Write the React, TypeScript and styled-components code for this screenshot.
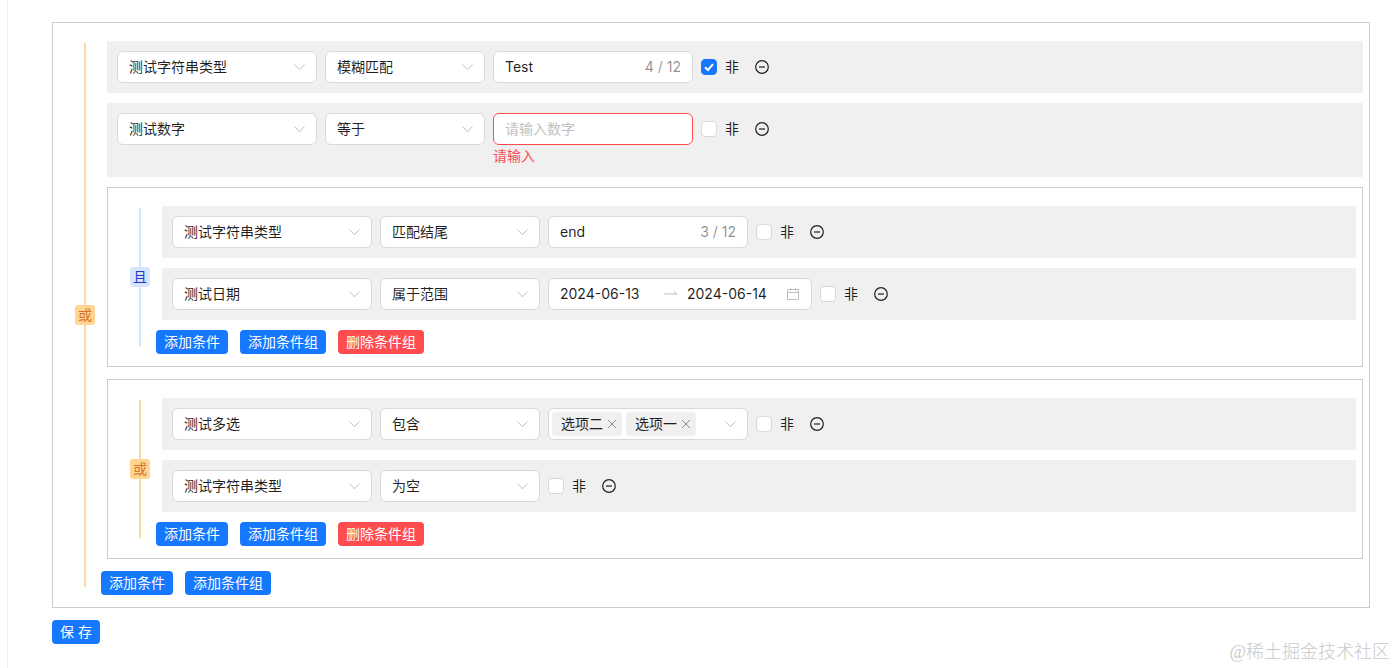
import { ReactNode } from "react"
import styled, { createGlobalStyle } from "styled-components"

const GlobalStyle = createGlobalStyle`
  html, body {
    margin: 0;
    background: #fff;
  }
  body {
    font-family: Inter, "Noto Sans CJK SC", sans-serif;
    font-size: 14px;
    line-height: 22px;
    color: rgba(0, 0, 0, 0.88);
  }
`

const Page = styled.div`
  box-sizing: border-box;
  height: 668px;
  margin-left: 7px;
  padding: 22px 26px 0 44px;
  border-left: 1px solid #f0f0f0;
  overflow: hidden;
  position: relative;
`

const Box = styled.div`
  display: flex;
  gap: 12px;
  padding: 18px 6px 12px 22px;
  margin-bottom: 2px;
  border: 1px solid #ccc;
`

const Rail = styled.div<{ $line: string }>`
  flex: none;
  width: 20px;
  margin: 2px 0 8px;
  display: flex;
  align-items: center;
  justify-content: center;
  background: linear-gradient(${(p) => p.$line}, ${(p) => p.$line}) center / 2px 100% no-repeat;
`

const Badge = styled.span<{ $bg: string; $fg: string }>`
  width: 20px;
  height: 20px;
  display: flex;
  align-items: center;
  justify-content: center;
  border-radius: 3px;
  background: ${(p) => p.$bg};
  color: ${(p) => p.$fg};
`

const Content = styled.div`
  flex: 1;
  min-width: 0;
  display: flex;
  flex-direction: column;
  gap: 10px;
`

const Row = styled.div`
  display: flex;
  align-items: flex-start;
  gap: 8px;
  padding: 10px;
  background: #f0f0f0;
`

const Actions = styled.div`
  display: flex;
  gap: 12px;
  margin-left: -6px;
`

const Button = styled.button<{ $danger?: boolean }>`
  height: 24px;
  padding: 0 8px;
  border: 0;
  border-radius: 4px;
  background: ${(p) => (p.$danger ? "#ff4d4f" : "#1677ff")};
  color: #fff;
  font: inherit;
  line-height: 24px;
`

const SaveBar = styled.div`
  display: flex;
  margin-top: 12px;
`

const Control = styled.div<{ $w: number; $error?: boolean }>`
  box-sizing: border-box;
  width: ${(p) => p.$w}px;
  height: 32px;
  padding: 0 11px;
  display: flex;
  align-items: center;
  justify-content: space-between;
  background: #fff;
  border: 1px solid ${(p) => (p.$error ? "#ff4d4f" : "#d9d9d9")};
  border-radius: 6px;
`

const MultiControl = styled(Control)`
  padding: 0 11px 0 3px;
`

const Placeholder = styled.span`
  color: #bfbfbf;
`

const Counter = styled.span`
  color: rgba(0, 0, 0, 0.45);
`

const FieldColumn = styled.div`
  display: flex;
  flex-direction: column;
`

const ErrorText = styled.div`
  color: #ff4d4f;
`

const DateValue = styled.span`
  flex: none;
  width: 96px;
`

const RangeArrow = styled.svg`
  flex: none;
  margin: 0 9px 0 8px;
`

const Calendar = styled.svg`
  flex: none;
  margin-left: 3px;
`

const RangeBody = styled.div`
  display: flex;
  align-items: center;
`

const Tags = styled.div`
  display: flex;
  gap: 4px;
`

const Tag = styled.span`
  height: 24px;
  padding: 0 5px 0 9px;
  display: flex;
  align-items: center;
  gap: 4px;
  border-radius: 4px;
  background: #f0f0f0;
`

const NotLabel = styled.label`
  height: 32px;
  display: flex;
  align-items: center;
  gap: 8px;
  padding-right: 8px;
`

const Check = styled.span<{ $on?: boolean }>`
  box-sizing: border-box;
  width: 16px;
  height: 16px;
  display: flex;
  align-items: center;
  justify-content: center;
  border-radius: 4px;
  background: ${(p) => (p.$on ? "#1677ff" : "#fff")};
  border: 1px solid ${(p) => (p.$on ? "#1677ff" : "#d9d9d9")};
`

const RemoveButton = styled.span`
  height: 32px;
  display: flex;
  align-items: center;
`

const Watermark = styled.div`
  position: absolute;
  right: 6px;
  bottom: 3px;
  font-family: "Liberation Serif", "Noto Sans CJK SC", serif;
  font-size: 18px;
  font-weight: 300;
  line-height: 26px;
  color: #c9c9c9;
`

const Chevron = () => (
  <svg width="12" height="12" viewBox="0 0 12 12" fill="none" stroke="#bfbfbf" strokeWidth="1">
    <path d="M1.5 3.5 6.5 8.8 11.5 3.5" />
  </svg>
)

const Cross = () => (
  <svg width="10" height="10" viewBox="0 0 10 10" fill="none" stroke="#8c8c8c" strokeWidth="1">
    <path d="M1 1 9 9M9 1 1 9" />
  </svg>
)

const MinusCircle = () => (
  <svg width="14" height="14" viewBox="0 0 14 14" fill="none" stroke="#1f1f1f" strokeWidth="1.2">
    <circle cx="7" cy="7" r="6.3" />
    <path d="M4 7h6" />
  </svg>
)

const CheckMark = () => (
  <svg width="12" height="12" viewBox="0 0 12 12" fill="none" stroke="#fff" strokeWidth="2">
    <path d="M2 6.2 5 9 10 3.2" />
  </svg>
)

function Select({ value, width }: { value: string; width: number }) {
  return (
    <Control $w={width}>
      <span>{value}</span>
      <Chevron />
    </Control>
  )
}

function TextValue({ value, count }: { value: string; count: string }) {
  return (
    <Control $w={200}>
      <span>{value}</span>
      <Counter>{count}</Counter>
    </Control>
  )
}

function DateRange() {
  return (
    <Control $w={264}>
      <RangeBody>
        <DateValue>2024-06-13</DateValue>
        <RangeArrow width="14" height="10" viewBox="0 0 14 10" fill="none" stroke="#bfbfbf">
          <path d="M0 5h13M10 2.5 13 5" />
        </RangeArrow>
        <DateValue>2024-06-14</DateValue>
        <Calendar width="14" height="14" viewBox="0 0 14 14" fill="none" stroke="#bfbfbf">
          <path d="M1.5 2.5h11v10h-11zM1.5 5.5h11M4.5 1v2.5M9.5 1v2.5" />
        </Calendar>
      </RangeBody>
    </Control>
  )
}

function MultiSelect({ values }: { values: string[] }) {
  return (
    <MultiControl $w={200}>
      <Tags>
        {values.map((v) => (
          <Tag key={v}>
            {v}
            <Cross />
          </Tag>
        ))}
      </Tags>
      <Chevron />
    </MultiControl>
  )
}

function NumberField() {
  return (
    <FieldColumn>
      <Control $w={200} $error>
        <Placeholder>请输入数字</Placeholder>
      </Control>
      <ErrorText>请输入</ErrorText>
    </FieldColumn>
  )
}

function Condition({ field, op, checked, children }: {
  field: string
  op: string
  checked?: boolean
  children?: ReactNode
}) {
  return (
    <Row>
      <Select value={field} width={200} />
      <Select value={op} width={160} />
      {children}
      <NotLabel>
        <Check $on={checked}>{checked && <CheckMark />}</Check>
        非
      </NotLabel>
      <RemoveButton>
        <MinusCircle />
      </RemoveButton>
    </Row>
  )
}

const relations = {
  or: { label: "或", line: "#ffd9a3", bg: "#ffd591", fg: "#d4702a" },
  and: { label: "且", line: "#d6e4ff", bg: "#d6e4ff", fg: "#1d39c4" },
}

function Group({ relation, children, nested }: {
  relation: "or" | "and"
  children: ReactNode
  nested?: boolean
}) {
  const r = relations[relation]
  return (
    <Box>
      <Rail $line={r.line}>
        <Badge $bg={r.bg} $fg={r.fg}>{r.label}</Badge>
      </Rail>
      <Content>
        {children}
        <Actions>
          <Button>添加条件</Button>
          <Button>添加条件组</Button>
          {nested && <Button $danger>删除条件组</Button>}
        </Actions>
      </Content>
    </Box>
  )
}

export default function App() {
  return (
    <Page>
      <GlobalStyle />
      <Group relation="or">
        <Condition field="测试字符串类型" op="模糊匹配" checked>
          <TextValue value="Test" count="4 / 12" />
        </Condition>
        <Condition field="测试数字" op="等于">
          <NumberField />
        </Condition>
        <Group relation="and" nested>
          <Condition field="测试字符串类型" op="匹配结尾">
            <TextValue value="end" count="3 / 12" />
          </Condition>
          <Condition field="测试日期" op="属于范围">
            <DateRange />
          </Condition>
        </Group>
        <Group relation="or" nested>
          <Condition field="测试多选" op="包含">
            <MultiSelect values={["选项二", "选项一"]} />
          </Condition>
          <Condition field="测试字符串类型" op="为空" />
        </Group>
      </Group>
      <SaveBar>
        <Button>保 存</Button>
      </SaveBar>
      <Watermark>@稀土掘金技术社区</Watermark>
    </Page>
  )
}
